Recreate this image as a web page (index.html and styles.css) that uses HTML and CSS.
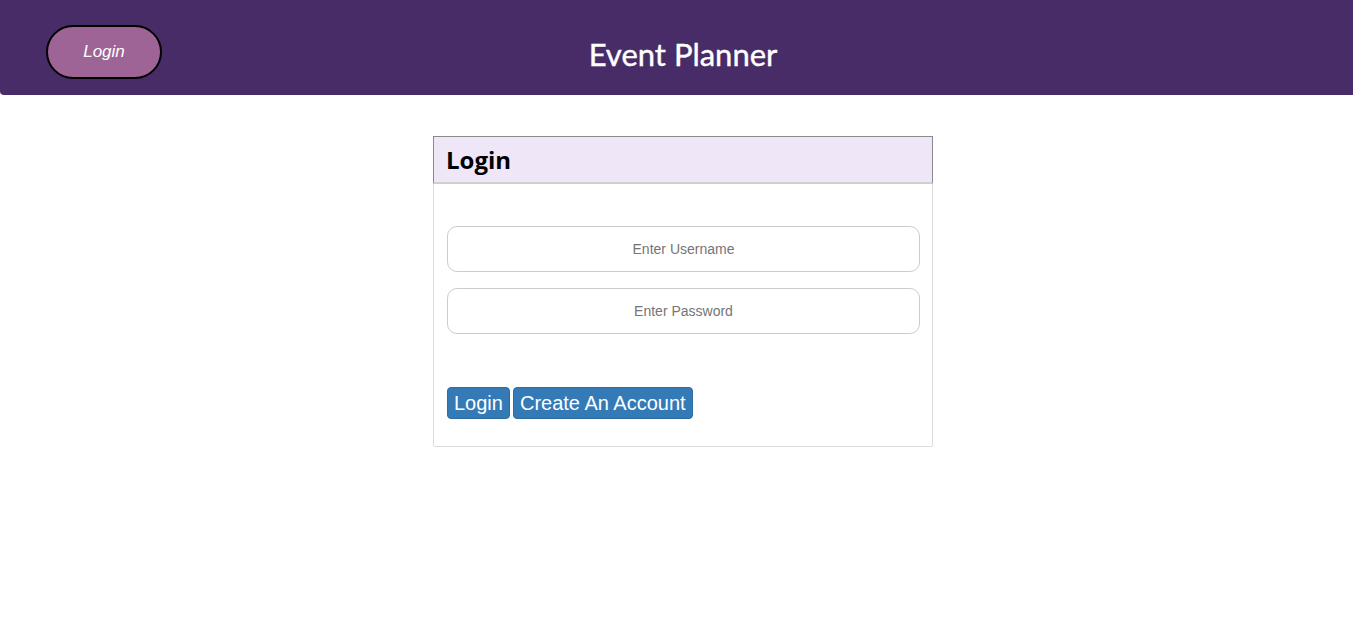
FILE: index.html
```html
<!DOCTYPE html>
<html lang="en">
<head>
<meta charset="utf-8">
<title>Event Planner</title>
<link rel="stylesheet" href="styles.css">
</head>
<body>
<header class="topbar">
  <button class="pill-btn" type="button">Login</button>
  <h1 class="app-title">Event Planner</h1>
</header>
<main class="page">
  <section class="card">
    <h2 class="card-head">Login</h2>
    <form class="card-body">
      <input class="field" type="text" placeholder="Enter Username">
      <input class="field" type="password" placeholder="Enter Password">
      <div class="actions">
        <button class="btn" type="button">Login</button>
        <button class="btn" type="button">Create An Account</button>
      </div>
    </form>
  </section>
</main>
</body>
</html>
```
FILE: styles.css
```css
html, body {
  margin: 0;
  padding: 0;
  background: #ffffff;
}

body {
  font-family: "Liberation Sans", Arial, sans-serif;
}

.topbar {
  display: flex;
  align-items: flex-start;
  height: 95px;
  background: #482c67;
  border-bottom-left-radius: 4px;
  box-sizing: border-box;
  padding-top: 25px;
  padding-left: 46px;
}

.pill-btn {
  width: 116px;
  height: 54px;
  border: 2px solid #000000;
  border-radius: 27px;
  background: #9e6496;
  color: #ffffff;
  font-family: "Liberation Sans", Arial, sans-serif;
  font-style: italic;
  font-size: 17px;
  padding: 0;
  margin: 0;
}

.app-title {
  flex: 1;
  margin: 11px 149px 0 0;
  text-align: center;
  color: #ffffff;
  font-family: Lato, "DejaVu Sans", sans-serif;
  font-weight: normal;
  font-size: 31px;
  line-height: 36px;
  -webkit-text-stroke: 0.4px #ffffff;
}

.page {
  padding-left: 13px;
  padding-top: 41px;
}

.card {
  width: 500px;
  margin: 0 auto;
  box-sizing: border-box;
  border: 1px solid #dddddd;
  border-top: none;
  border-radius: 2px;
}

.card-head {
  height: 48px;
  box-sizing: border-box;
  background: #efe6f8;
  border: 1px solid #8a8a8a;
  border-bottom: 2px solid #cfcfcf;
  padding: 0 12px;
  font-family: "Open Sans", "Noto Sans", sans-serif;
  font-weight: bold;
  font-size: 24px;
  line-height: 45px;
  color: #000000;
  margin: 0 -1px;
}

.card-body {
  display: flex;
  flex-direction: column;
  padding: 42px 12px 27px 13px;
}

.field {
  height: 46px;
  box-sizing: border-box;
  border: 1px solid #cccccc;
  border-radius: 10px;
  text-align: center;
  font-family: "Liberation Sans", Arial, sans-serif;
  font-size: 14px;
  color: #333333;
  margin: 0 0 16px 0;
  padding: 0 12px;
}

.field::placeholder {
  color: #757575;
}

.actions {
  display: flex;
  gap: 3px;
  margin-top: 37px;
}

.btn {
  height: 32px;
  box-sizing: border-box;
  padding: 0 6px;
  margin: 0;
  background: #337ab7;
  border: 1px solid #2e6da4;
  border-radius: 4px;
  color: #ffffff;
  font-family: "Liberation Sans", Arial, sans-serif;
  font-size: 20px;
  line-height: 30px;
}
```
